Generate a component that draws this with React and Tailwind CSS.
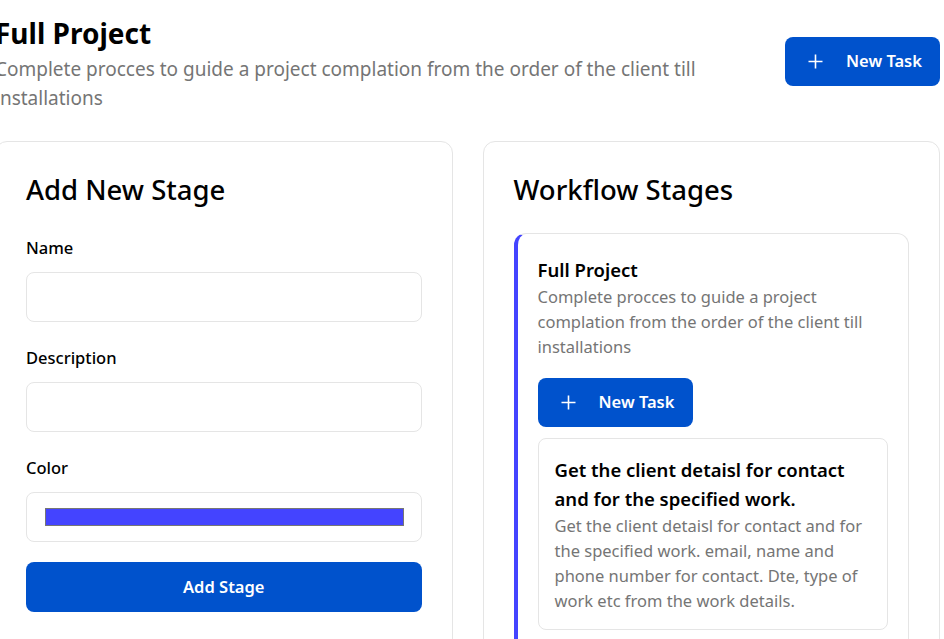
import React from 'react';

function PlusIcon() {
  return (
    <svg className="w-[15px] h-[15px]" fill="none" stroke="currentColor" viewBox="0 0 15 15">
      <path strokeWidth="1.6" d="M7.5 0.5v14M0.5 7.5h14" />
    </svg>
  );
}

function NewTaskButton({ className = '' }) {
  return (
    <button className={`flex items-center h-[49px] w-[155px] pl-[23px] rounded-lg bg-[#0052cc] text-white text-[16.5px] font-semibold ${className}`}>
      <PlusIcon />
      <span className="ml-[23px]">New Task</span>
    </button>
  );
}

function Field({ label, children }) {
  return (
    <div className="mb-6">
      <label className="block text-[16.5px] leading-6 font-medium text-black mb-3">{label}</label>
      {children}
    </div>
  );
}

export default function App() {
  return (
    <div className="min-h-screen bg-white overflow-hidden font-['Noto_Sans',sans-serif]">
      <div className="ml-[-5px] w-[945px] pt-[15px]">
        {/* Header */}
        <div className="flex justify-between items-start">
          <div className="max-w-[740px]">
            <h1 className="text-[28px] leading-9 font-bold text-black mb-1">Full Project</h1>
            <p className="text-[19px] leading-[29px] text-[#757575]">
              Complete procces to guide a project complation from the order of the client till installations
            </p>
          </div>
          <NewTaskButton className="mt-[22px]" />
        </div>

        <div className="grid grid-cols-2 gap-[30px] mt-[28px]">
          {/* Add New Stage */}
          <div className="border border-[#e5e5e5] rounded-xl p-[30px]">
            <h2 className="text-[27.5px] leading-9 font-medium text-black mb-7">Add New Stage</h2>
            <Field label="Name">
              <input className="block w-full h-[50px] rounded-lg border border-[#e5e5e5] px-4" />
            </Field>
            <Field label="Description">
              <input className="block w-full h-[50px] rounded-lg border border-[#e5e5e5] px-4" />
            </Field>
            <label className="block text-[16.5px] leading-6 font-medium text-black mb-3">Color</label>
            <div className="h-[50px] rounded-lg border border-[#e5e5e5] pl-[18px] pr-[17px] pt-[15px]">
              <div className="h-[18px] bg-[#4444ff] border border-[#767676]"></div>
            </div>
            <button className="mt-5 w-full h-[50px] rounded-lg bg-[#0052cc] text-white text-[16.5px] font-semibold">
              Add Stage
            </button>
          </div>

          {/* Workflow Stages */}
          <div className="border border-[#e5e5e5] rounded-xl p-[30px]">
            <h2 className="text-[27.5px] leading-9 font-medium text-black">Workflow Stages</h2>
            <div className="mt-[25px] border border-[#e5e5e5] border-l-4 border-l-[#4444ff] rounded-xl pl-5 pr-5 pt-[22px] pb-5">
              <h3 className="text-[18.5px] leading-7 font-semibold text-black">Full Project</h3>
              <p className="text-[16.5px] leading-[25px] text-[#757575]">
                Complete procces to guide a project complation from the order of the client till installations
              </p>
              <NewTaskButton className="mt-[19px] w-[154px]" />
              <div className="mt-[11px] border border-[#e5e5e5] rounded-lg p-4">
                <h4 className="text-[18.5px] leading-[29px] font-semibold text-black">
                  Get the client detaisl for contact and for the specified work.
                </h4>
                <p className="text-[16.5px] leading-[25px] text-[#757575]">
                  Get the client detaisl for contact and for the specified work. email, name and phone number for contact. Dte, type of work etc from the work details.
                </p>
              </div>
            </div>
          </div>
        </div>
      </div>
    </div>
  );
}
